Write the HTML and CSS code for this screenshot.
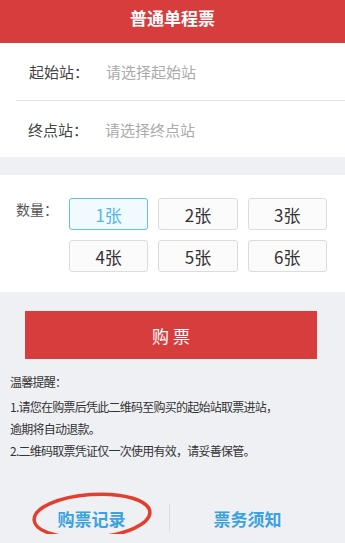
FILE: index.html
```html
<!DOCTYPE html>
<html>
<head>
    <meta charset="utf-8">
    <title>普通单程票</title>
    <link rel="stylesheet" href="styles.css">
</head>
<body>
    <!-- 标题栏 -->
    <div class="header">普通单程票</div>

    <!-- 站点选择 -->
    <div class="stations">
        <div class="row">
            <span class="label">起始站：</span>
            <span class="placeholder">请选择起始站</span>
        </div>
        <div class="row">
            <span class="label">终点站：</span>
            <span class="placeholder">请选择终点站</span>
        </div>
    </div>

    <!-- 数量 -->
    <div class="quantity">
        <span class="qty-label">数量：</span>
        <div class="qty-buttons">
            <button class="qty active">1张</button>
            <button class="qty">2张</button>
            <button class="qty">3张</button>
            <button class="qty">4张</button>
            <button class="qty">5张</button>
            <button class="qty">6张</button>
        </div>
    </div>

    <button class="buy">购 票</button>

    <!-- 温馨提醒 -->
    <div class="tips">
        <p class="tips-title">温馨提醒：</p>
        <p>1.请您在购票后凭此二维码至购买的起始站取票进站，<br>逾期将自动退款。</p>
        <p>2.二维码取票凭证仅一次使用有效，请妥善保管。</p>
    </div>

    <!-- 底部链接 -->
    <div class="links">
        <a class="link">购票记录
            <svg class="circle" width="124" height="52" viewBox="0 0 124 52">
                <ellipse cx="62" cy="26" rx="58" ry="21.5" fill="none" stroke="#e2402f" stroke-width="3.5" transform="rotate(-4 62 26)"/>
            </svg>
        </a>
        <span class="divider"></span>
        <a class="link">票务须知</a>
    </div>
</body>
</html>
```

FILE: styles.css
```css
/* 页面样式 */
body {
    margin: 0;
    background-color: #eff0f3;
    font-family: "Noto Sans CJK SC", "Noto Sans", sans-serif;
    color: #333;
}
.header {
    height: 43px;
    line-height: 36px;
    background-color: #d63d3c;
    color: white;
    text-align: center;
    font-size: 17px;
    font-weight: bold;
}
.stations {
    background-color: white;
}
.row {
    display: flex;
    align-items: center;
    height: 57px;
    padding-left: 29px;
    font-size: 15px;
}
.row + .row {
    height: 56px;
    margin-left: 16px;
    padding-left: 12px;
    border-top: 1px solid #e3e3e3;
}
.label {
    width: 77px;
    color: #444;
}
.placeholder {
    color: #aaa;
}
.quantity {
    display: flex;
    margin-top: 18px;
    padding: 23px 18px 20px 16px;
    background-color: white;
}
.qty-label {
    width: 53px;
    margin-top: 1px;
    font-size: 14px;
    color: #555;
    line-height: 20px;
}
.qty-buttons {
    flex: 1;
    display: grid;
    grid-template-columns: repeat(3, 1fr);
    column-gap: 10px;
    row-gap: 10px;
}
.qty {
    height: 32px;
    padding: 0;
    font-family: inherit;
    font-size: 17px;
    color: #333;
    background-color: #fbfbfb;
    border: 1px solid #dcdcdc;
    border-radius: 3px;
}
.qty.active {
    color: #55b5e6;
    background-color: #f1fbff;
    border-color: #5fc1ec;
}
.buy {
    display: block;
    width: 292px;
    height: 48px;
    margin: 19px 0 0 25px;
    font-family: inherit;
    font-size: 17px;
    color: white;
    background-color: #d63d3c;
    border: none;
}
.tips {
    padding: 12px 10px 0;
    font-size: 12px;
    letter-spacing: -0.75px;
    line-height: 22px;
    color: #333;
}
.tips p {
    margin: 0;
}
.tips-title {
    margin-bottom: 3px !important;
}
.links {
    display: flex;
    align-items: center;
    margin-top: 40px;
    padding: 0 20px 0 14px;
    height: 32px;
}
.link {
    position: relative;
    flex: 1;
    text-align: center;
    font-size: 17px;
    font-weight: bold;
    color: #3aa2e2;
}
.divider {
    width: 1px;
    height: 28px;
    background-color: #dcdcdc;
}
.circle {
    position: absolute;
    left: 50%;
    top: -16px;
    margin-left: -62px;
}
```
